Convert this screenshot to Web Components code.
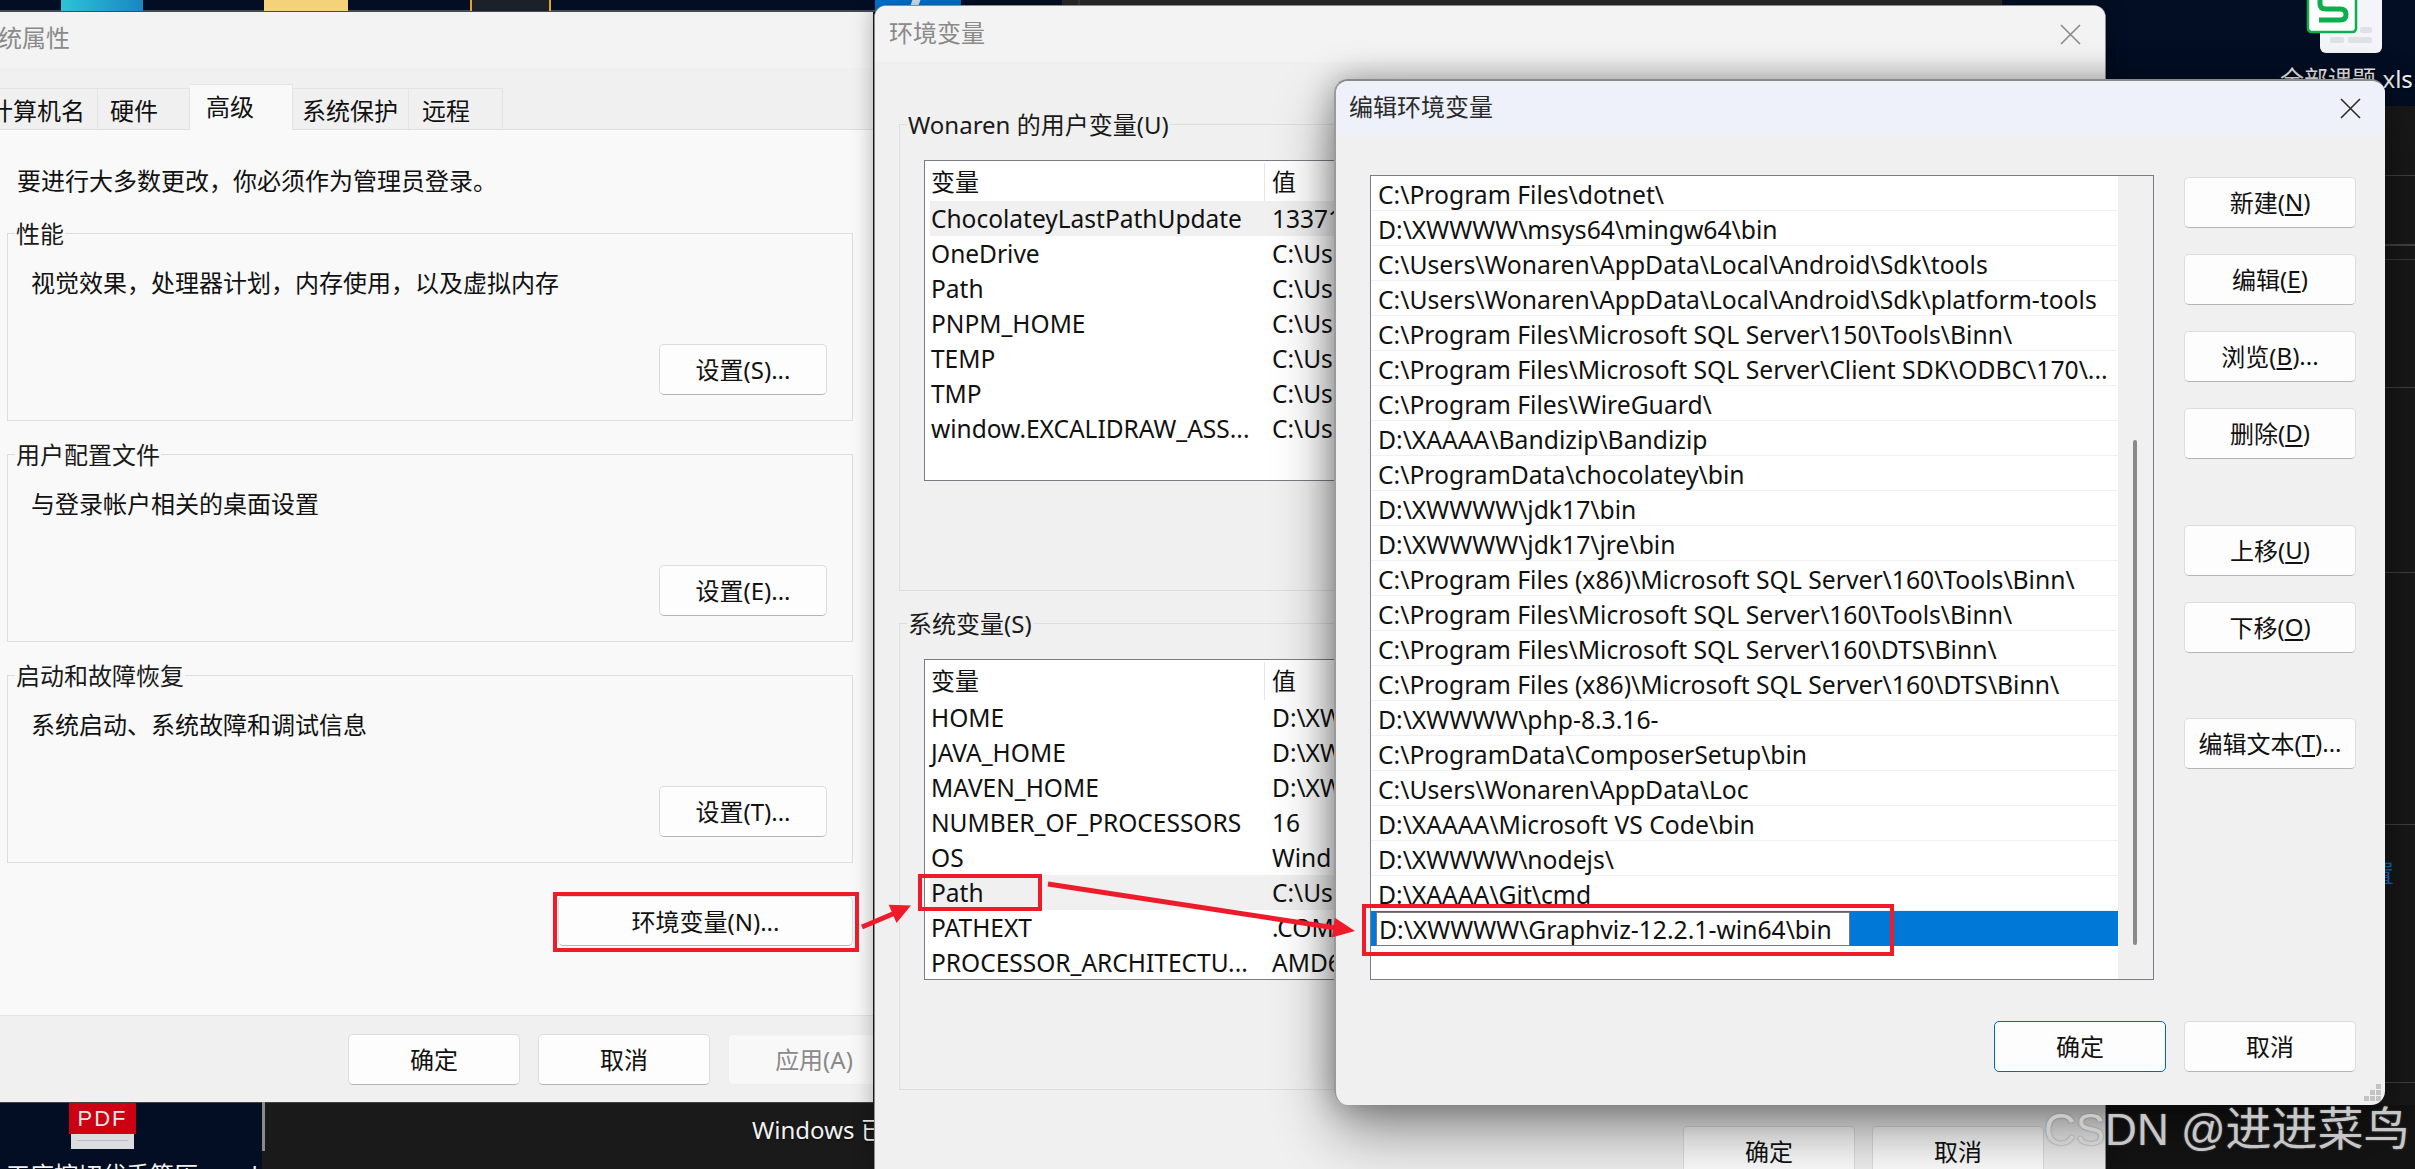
<!DOCTYPE html>
<html lang="zh">
<head>
<meta charset="utf-8">
<title>环境变量</title>
<style>
  html, body { margin: 0; padding: 0; background: #1a1a1a; }
  body {
    font-family: "Noto Sans", "Noto Sans CJK SC", sans-serif;
    font-size: 24px;
    color: #111;
    overflow: hidden;
  }
  #desk { position: relative; width: 2415px; height: 1169px; overflow: hidden; }
  desk-backdrop { position: absolute; left: 0; top: 0; width: 2415px; height: 1169px; }
  sys-dialog { position: absolute; left: -40px; top: 12px; width: 913px; height: 1090px; }
  env-dialog { position: absolute; left: 874px; top: 5px; width: 1232px; height: 1164px; }
  edit-dialog { position: absolute; left: 1334px; top: 79px; width: 1051px; height: 1026px; }
  note-overlay { position: absolute; left: 0; top: 0; width: 2415px; height: 1169px; }
  site-mark { position: absolute; left: 2044px; top: 1099px; }
</style>
</head>
<body>
<div id="desk">
  <desk-backdrop></desk-backdrop>
  <sys-dialog></sys-dialog>
  <env-dialog></env-dialog>
  <edit-dialog></edit-dialog>
  <note-overlay></note-overlay>
  <site-mark></site-mark>
</div>

<script>
  // Plain dialog button
  class WinButton extends HTMLElement {
    constructor() {
      super();
      this.attachShadow({ mode: 'open' });
      this.shadowRoot.innerHTML = `
        <style>
          :host {
            display: flex;
            align-items: center;
            justify-content: center;
            flex: none;
            box-sizing: border-box;
            width: 172px;
            height: 51px;
            padding-bottom: 2px;
            background: #fdfdfd;
            border: 1px solid #dcdcdc;
            border-bottom-color: #b4b4b4;
            border-radius: 5px;
            color: #111;
            white-space: nowrap;
          }
          :host([primary]) { border: 1.5px solid #0067c0; }
          :host([disabled]) { background: #f8f8f8; border-color: #eee; color: #8a8a8a; }
        </style>
        <slot></slot>
      `;
    }
  }
  customElements.define('win-button', WinButton);

  // Window frame: title bar with close cross, content in the slot
  class WinFrame extends HTMLElement {
    constructor() {
      super();
      this.attachShadow({ mode: 'open' });
      const cross = this.hasAttribute('noclose') ? '' : `
        <svg width="21" height="21" viewBox="0 0 21 21"><path d="M1 1 L20 20 M20 1 L1 20" fill="none" stroke="currentColor" stroke-width="1.6"/></svg>`;
      this.shadowRoot.innerHTML = `
        <style>
          :host {
            display: flex;
            flex-direction: column;
            height: 100%;
            box-sizing: border-box;
            overflow: hidden;
            background: #f0f0f0;
          }
          .bar {
            flex: none;
            display: flex;
            align-items: center;
            justify-content: space-between;
            height: var(--bar-height, 56px);
            padding: 0 24px 0 var(--bar-left, 14px);
            background: var(--bar-bg, #f3f3f3);
            color: var(--bar-color, #8a8a8a);
          }
          .bar span { margin-top: var(--bar-shift, -6px); }
        </style>
        <div class="bar"><span>${this.getAttribute('heading')}</span>${cross}</div>
        <slot></slot>
      `;
    }
  }
  customElements.define('win-frame', WinFrame);

  // Titled group box, the legend sits on the top border
  class GroupBox extends HTMLElement {
    constructor() {
      super();
      this.attachShadow({ mode: 'open' });
      this.shadowRoot.innerHTML = `
        <style>
          :host {
            display: flex;
            flex-direction: column;
            box-sizing: border-box;
            border: 1px solid #dedede;
          }
          .legend {
            flex: none;
            align-self: flex-start;
            height: 36px;
            line-height: 36px;
            margin: -18px 0 0 7px;
            padding: 0 1px;
            background: var(--legend-bg, #f9f9f9);
            color: #1a1a1a;
          }
        </style>
        <div class="legend">${this.getAttribute('legend')}</div>
        <slot></slot>
      `;
    }
  }
  customElements.define('group-box', GroupBox);

  // Tab strip of the system properties window
  class TabStrip extends HTMLElement {
    constructor() {
      super();
      this.attachShadow({ mode: 'open' });
      this.shadowRoot.innerHTML = `
        <style>
          :host {
            display: flex;
            align-items: flex-end;
            flex: none;
            height: 62px;
            box-sizing: border-box;
            padding-left: 16px;
            background: #f0f0f0;
            border-bottom: 1px solid #dfdfdf;
          }
          ::slotted(span) {
            box-sizing: border-box;
            height: 41px;
            line-height: 43px;
            border: 1px solid #e4e4e4;
            border-width: 1px 1px 0 0;
          }
          ::slotted(span.on) {
            height: 46px;
            line-height: 44px;
            margin-bottom: -1px;
            background: #f9f9f9;
            border-left-width: 0;
          }
        </style>
        <slot></slot>
      `;
    }
  }
  customElements.define('tab-strip', TabStrip);

  // Variable table: header row, rows come through the slot
  class VarList extends HTMLElement {
    constructor() {
      super();
      this.attachShadow({ mode: 'open' });
      this.shadowRoot.innerHTML = `
        <style>
          :host {
            display: block;
            box-sizing: border-box;
            height: 321px;
            margin: 17px 24px 0 24px;
            background: #fff;
            border: 1px solid #7b7b88;
            overflow: hidden;
          }
          .head { display: flex; height: 40px; box-sizing: border-box; padding: 2px 0 0 6px; line-height: 38px; }
          .head span:first-child { width: 333px; height: 38px; border-right: 1px solid #e5e5e5; }
          .head span:last-child { padding-left: 7px; }
        </style>
        <div class="head"><span>变量</span><span>值</span></div>
        <slot></slot>
      `;
    }
  }
  customElements.define('var-list', VarList);

  class VarRow extends HTMLElement {
    constructor() {
      super();
      this.attachShadow({ mode: 'open' });
      this.shadowRoot.innerHTML = `
        <style>
          :host { display: flex; height: 35px; line-height: 35px; margin-left: 5px; padding-left: 1px; white-space: nowrap; font-size: 24.5px; }
          :host([current]) { background: #f0f0f0; }
          .name { width: 341px; flex: none; }
        </style>
        <span class="name">${this.getAttribute('name')}</span><span>${this.getAttribute('value')}</span>
      `;
    }
  }
  customElements.define('var-row', VarRow);

  // One line of the Path editor
  class PathRow extends HTMLElement {
    constructor() {
      super();
      this.attachShadow({ mode: 'open' });
      this.shadowRoot.innerHTML = `
        <style>
          :host {
            display: block;
            box-sizing: border-box;
            height: 35px;
            line-height: 38px;
            padding-left: 7px;
            border-bottom: 1px solid #f0f0f0;
            white-space: nowrap;
            font-size: 24.7px;
          }
          :host([editing]) { padding: 1px 0 0 5px; background: #0078d7; border: 0; }
          .edit {
            display: block;
            box-sizing: border-box;
            width: 474px;
            height: 34px;
            line-height: 33px;
            padding-left: 2px;
            background: #fff;
            border: 1px solid #7a7a7a;
          }
        </style>
        ${this.hasAttribute('editing') ? '<span class="edit"><slot></slot></span>' : '<slot></slot>'}
      `;
    }
  }
  customElements.define('path-row', PathRow);

  // Left window: system properties
  class SysDialog extends HTMLElement {
    constructor() {
      super();
      this.attachShadow({ mode: 'open' });
      this.shadowRoot.innerHTML = `
        <style>
          :host { display: block; --bar-shift: -8px; }
          .body {
            flex: none;
            height: 885px;
            box-sizing: border-box;
            padding: 33px 20px 0 47px;
            background: #f9f9f9;
            display: flex;
            flex-direction: column;
          }
          .intro { height: 36px; line-height: 36px; margin: 0 0 34px 10px; }
          group-box { height: 188px; flex: none; margin-bottom: 33px; }
          .desc { height: 36px; line-height: 36px; margin: 13px 0 0 23px; }
          group-box win-button { width: 168px; margin: auto 25px 25px auto; }
          .env { width: 295px; height: 50px; margin: 0 0 0 auto; }
          .foot {
            flex: 1;
            display: flex;
            gap: 18px;
            padding: 18px 0 0 388px;
            background: #f0f0f0;
            border-top: 1px solid #e3e3e3;
          }
        </style>
        <win-frame heading="系统属性" noclose>
          <tab-strip>
            <span style="width:122px;padding-left:13px">计算机名</span>
            <span style="width:92px;padding-left:12px">硬件</span>
            <span class="on" style="width:103px;padding-left:16px">高级</span>
            <span style="width:116px;padding-left:9px">系统保护</span>
            <span style="width:94px;padding-left:13px">远程</span>
          </tab-strip>
          <div class="body">
            <div class="intro">要进行大多数更改，你必须作为管理员登录。</div>
            <group-box legend="性能">
              <div class="desc">视觉效果，处理器计划，内存使用，以及虚拟内存</div>
              <win-button>设置(S)...</win-button>
            </group-box>
            <group-box legend="用户配置文件">
              <div class="desc">与登录帐户相关的桌面设置</div>
              <win-button>设置(E)...</win-button>
            </group-box>
            <group-box legend="启动和故障恢复">
              <div class="desc">系统启动、系统故障和调试信息</div>
              <win-button>设置(T)...</win-button>
            </group-box>
            <win-button class="env">环境变量(N)...</win-button>
          </div>
          <div class="foot">
            <win-button>确定</win-button>
            <win-button>取消</win-button>
            <win-button disabled>应用(A)</win-button>
          </div>
        </win-frame>
      `;
    }
  }
  customElements.define('sys-dialog', SysDialog);

  // Middle window: environment variables
  class EnvDialog extends HTMLElement {
    constructor() {
      super();
      this.attachShadow({ mode: 'open' });
      this.shadowRoot.innerHTML = `
        <style>
          :host {
            display: block;
            border-radius: 12px 12px 0 0;
            overflow: hidden;
            box-shadow: 0 0 22px rgba(0,0,0,.3);
            --legend-bg: #f0f0f0;
            --bar-height: 56px;
          }
          win-frame { border: 1px solid #8c8c8c; border-bottom: 0; border-radius: 12px 12px 0 0; }
          .body { padding: 62px 24px 0 24px; display: flex; flex-direction: column; }
          group-box { height: 467px; flex: none; }
          group-box + group-box { margin-top: 32px; }
          .foot { display: flex; justify-content: flex-end; gap: 17px; padding: 36px 37px 0 0; }
        </style>
        <win-frame heading="环境变量">
          <div class="body">
            <group-box legend="Wonaren 的用户变量(U)">
              <var-list>
                <var-row current name="ChocolateyLastPathUpdate" value="13371"></var-row>
                <var-row name="OneDrive" value="C:\\Us"></var-row>
                <var-row name="Path" value="C:\\Us"></var-row>
                <var-row name="PNPM_HOME" value="C:\\Us"></var-row>
                <var-row name="TEMP" value="C:\\Us"></var-row>
                <var-row name="TMP" value="C:\\Us"></var-row>
                <var-row name="window.EXCALIDRAW_ASS..." value="C:\\Us"></var-row>
              </var-list>
            </group-box>
            <group-box legend="系统变量(S)">
              <var-list>
                <var-row name="HOME" value="D:\\XW"></var-row>
                <var-row name="JAVA_HOME" value="D:\\XW"></var-row>
                <var-row name="MAVEN_HOME" value="D:\\XW"></var-row>
                <var-row name="NUMBER_OF_PROCESSORS" value="16"></var-row>
                <var-row name="OS" value="Wind"></var-row>
                <var-row current name="Path" value="C:\\Us"></var-row>
                <var-row name="PATHEXT" value=".COM"></var-row>
                <var-row name="PROCESSOR_ARCHITECTU..." value="AMD6"></var-row>
              </var-list>
            </group-box>
            <div class="foot">
              <win-button>确定</win-button>
              <win-button>取消</win-button>
            </div>
          </div>
        </win-frame>
      `;
    }
  }
  customElements.define('env-dialog', EnvDialog);

  // Front window: edit the Path variable
  class EditDialog extends HTMLElement {
    constructor() {
      super();
      this.attachShadow({ mode: 'open' });
      const paths = [
        'C:\\Program Files\\dotnet\\',
        'D:\\XWWWW\\msys64\\mingw64\\bin',
        'C:\\Users\\Wonaren\\AppData\\Local\\Android\\Sdk\\tools',
        'C:\\Users\\Wonaren\\AppData\\Local\\Android\\Sdk\\platform-tools',
        'C:\\Program Files\\Microsoft SQL Server\\150\\Tools\\Binn\\',
        'C:\\Program Files\\Microsoft SQL Server\\Client SDK\\ODBC\\170\\...',
        'C:\\Program Files\\WireGuard\\',
        'D:\\XAAAA\\Bandizip\\Bandizip',
        'C:\\ProgramData\\chocolatey\\bin',
        'D:\\XWWWW\\jdk17\\bin',
        'D:\\XWWWW\\jdk17\\jre\\bin',
        'C:\\Program Files (x86)\\Microsoft SQL Server\\160\\Tools\\Binn\\',
        'C:\\Program Files\\Microsoft SQL Server\\160\\Tools\\Binn\\',
        'C:\\Program Files\\Microsoft SQL Server\\160\\DTS\\Binn\\',
        'C:\\Program Files (x86)\\Microsoft SQL Server\\160\\DTS\\Binn\\',
        'D:\\XWWWW\\php-8.3.16-',
        'C:\\ProgramData\\ComposerSetup\\bin',
        'C:\\Users\\Wonaren\\AppData\\Loc',
        'D:\\XAAAA\\Microsoft VS Code\\bin',
        'D:\\XWWWW\\nodejs\\',
        'D:\\XAAAA\\Git\\cmd'
      ];
      this.shadowRoot.innerHTML = `
        <style>
          :host {
            display: block;
            border-radius: 14px;
            box-shadow: 0 0 30px rgba(0,0,0,.3), 0 26px 60px rgba(0,0,0,.42);
            --bar-height: 55px;
            --bar-bg: #eef0fa;
            --bar-color: #2b2b2b;
            --bar-left: 13px;
          }
          win-frame { border-radius: 14px; border-top: 2px solid #8a8a8a; border-left: 2px solid #9a9a9a; }
          .main { flex: none; display: flex; gap: 30px; padding: 39px 29px 0 34px; }
          .list {
            flex: none;
            display: flex;
            width: 784px;
            height: 805px;
            box-sizing: border-box;
            background: #fff;
            border: 1px solid #7b7b88;
          }
          .rows { flex: 1; overflow: hidden; }
          .track { flex: none; width: 35px; background: #f0f0f0; padding: 264px 0 0 15px; box-sizing: border-box; }
          .thumb { width: 4px; height: 505px; background: #8a8a8a; border-radius: 2px; }
          .side { display: flex; flex-direction: column; gap: 26px; padding-top: 2px; }
          .far { margin-top: 40px; }
          .side .last { margin-top: 39px; }
          u { text-underline-offset: 3px; }
          .foot { display: flex; justify-content: flex-end; gap: 18px; padding: 41px 29px 0 0; }
          .grip { position: absolute; right: 3px; bottom: 3px; }
        </style>
        <win-frame heading="编辑环境变量">
          <div class="main">
            <div class="list">
              <div class="rows">
                ${paths.map(p => `<path-row>${p}</path-row>`).join('')}
                <path-row editing>D:\\XWWWW\\Graphviz-12.2.1-win64\\bin</path-row>
              </div>
              <div class="track"><div class="thumb"></div></div>
            </div>
            <div class="side">
              <win-button>新建(<u>N</u>)</win-button>
              <win-button>编辑(<u>E</u>)</win-button>
              <win-button>浏览(<u>B</u>)...</win-button>
              <win-button>删除(<u>D</u>)</win-button>
              <win-button class="far">上移(<u>U</u>)</win-button>
              <win-button>下移(<u>O</u>)</win-button>
              <win-button class="last">编辑文本(<u>T</u>)...</win-button>
            </div>
          </div>
          <div class="foot">
            <win-button primary>确定</win-button>
            <win-button>取消</win-button>
          </div>
        </win-frame>
        <svg class="grip" width="18" height="18" viewBox="0 0 18 18" fill="#c4c4c4">
          <rect x="12" y="0" width="5" height="5"/>
          <rect x="6" y="6" width="5" height="5"/><rect x="12" y="6" width="5" height="5"/>
          <rect x="0" y="12" width="5" height="5"/><rect x="6" y="12" width="5" height="5"/><rect x="12" y="12" width="5" height="5"/>
        </svg>
      `;
    }
  }
  customElements.define('edit-dialog', EditDialog);

  // The desktop behind the windows, items are free on the canvas
  class DeskBackdrop extends HTMLElement {
    constructor() {
      super();
      this.attachShadow({ mode: 'open' });
      this.shadowRoot.innerHTML = `
        <style>
          :host { display: block; background: #1a1a1a; overflow: hidden; color: #f2f2f2; }
          div, span, svg { position: absolute; }
          .navy { background: #030e24; }
          .label { white-space: nowrap; text-shadow: 0 1px 2px rgba(0,0,0,.6); }
        </style>
        <!-- top edge -->
        <div class="navy" style="left:0;top:0;width:1062px;height:12px"></div>
        <div style="left:0;top:10px;width:875px;height:2px;background:#454b55"></div>
        <div style="left:61px;top:0;width:82px;height:11px;background:linear-gradient(90deg,#2cc4d8,#1a86c0)"></div>
        <div style="left:264px;top:0;width:84px;height:11px;background:#f3d27a"></div>
        <div style="left:470px;top:0;width:81px;height:11px;box-sizing:border-box;background:#1c2028;border:solid #dfa22a;border-width:0 2px"></div>
        <div style="left:875px;top:0;width:86px;height:12px;background:#0074d0"></div>
        <div style="left:911px;top:0;width:8px;height:8px;background:#dfeaf5;transform:skewX(-20deg)"></div>
        <div style="left:1062px;top:0;width:940px;height:12px;background:#2a2a2a"></div>
        <div style="left:1078px;top:0;width:2px;height:12px;background:#3a3a3a"></div>
        <!-- top right, with the spreadsheet icon -->
        <div class="navy" style="left:2002px;top:0;width:413px;height:106px"></div>
        <div style="left:2320px;top:0;width:62px;height:53px;background:#f4f5f9;border-radius:0 0 6px 6px"></div>
        <div style="left:2360px;top:27px;width:12px;height:6px;background:#dfe1e6;border-radius:2px"></div>
        <div style="left:2330px;top:37px;width:14px;height:6px;background:#dfe1e6;border-radius:2px"></div>
        <div style="left:2348px;top:37px;width:24px;height:6px;background:#dfe1e6;border-radius:2px"></div>
        <svg style="left:2306px;top:0" width="52" height="34" viewBox="0 0 52 34">
          <path d="M2 0 V28 Q2 32 6 32 H46 Q50 32 50 28 V0" fill="#fff" stroke="#0bb04c" stroke-width="2.5"/>
          <path d="M14 0 V4 Q14 9 20 9 H34 Q40 9 40 14.5 Q40 20 34 20 H13" fill="none" stroke="#0bb04c" stroke-width="5"/>
        </svg>
        <span class="label" style="left:2280px;top:62px;line-height:34px">全部课题.xls</span>
        <!-- right strip -->
        <div style="left:2385px;top:175px;width:30px;height:1px;background:#454545"></div>
        <div style="left:2385px;top:244px;width:30px;height:2px;background:#454545"></div>
        <div style="left:2385px;top:259px;width:30px;height:1px;background:#3c3c3c"></div>
        <div style="left:2385px;top:387px;width:30px;height:1px;background:#454545"></div>
        <div style="left:2385px;top:572px;width:30px;height:1px;background:#454545"></div>
        <div style="left:2385px;top:824px;width:30px;height:1px;background:#454545"></div>
        <div style="left:2385px;top:1082px;width:30px;height:1px;background:#454545"></div>
        <span style="left:2370px;top:860px;color:#0a7ad0;line-height:26px">置</span>
        <div style="left:2106px;top:1105px;width:309px;height:64px;background:#141414"></div>
        <!-- bottom left, with the pdf icon -->
        <div class="navy" style="left:0;top:1102px;width:262px;height:67px"></div>
        <div style="left:0;top:1100px;width:873px;height:3px;background:#444"></div>
        <div style="left:262px;top:1102px;width:3px;height:49px;background:#8a8a8a"></div>
        <div style="left:71px;top:1103px;width:63px;height:46px;background:#dcdde0"></div>
        <div style="left:77px;top:1140px;width:51px;height:1px;background:#bdbdbd"></div>
        <div style="left:69px;top:1103px;width:67px;height:31px;background:#cc0012;color:#e6e6e6;font:22px/31px 'Liberation Sans',sans-serif;letter-spacing:2px;text-align:center">PDF</div>
        <span class="label" style="left:6px;top:1158px;line-height:34px">工序控切代手签历.......d</span>
        <span class="label" style="left:752px;top:1112px;line-height:36px">Windows 已</span>
      `;
    }
  }
  customElements.define('desk-backdrop', DeskBackdrop);

  // Red marks somebody drew over the screenshot
  class NoteOverlay extends HTMLElement {
    constructor() {
      super();
      this.attachShadow({ mode: 'open' });
      this.shadowRoot.innerHTML = `
        <style>:host { display: block; pointer-events: none; } svg { display: block; }</style>
        <svg width="2415" height="1169" viewBox="0 0 2415 1169" fill="none" stroke="#ee1c2a" stroke-width="4">
          <rect x="555" y="894" width="302" height="56"/>
          <rect x="920" y="876" width="120" height="33"/>
          <rect x="1364" y="906" width="528" height="48"/>
          <path d="M862 927 L895 913" stroke-width="5"/>
          <polygon points="911,905.6 896.5,923 888.7,904.7" fill="#ee1c2a" stroke="none"/>
          <path d="M1048 884 L1336 928" stroke-width="5"/>
          <polygon points="1355,931 1331.8,937.6 1334.8,917.8" fill="#ee1c2a" stroke="none"/>
        </svg>
      `;
    }
  }
  customElements.define('note-overlay', NoteOverlay);

  // Image host watermark
  class SiteMark extends HTMLElement {
    constructor() {
      super();
      this.attachShadow({ mode: 'open' });
      this.shadowRoot.innerHTML = `
        <style>
          :host {
            display: block;
            white-space: nowrap;
            font: 44px/60px "Liberation Sans", "Noto Sans CJK SC", sans-serif;
            color: rgba(215,215,215,.9);
            text-shadow: 0 0 2px rgba(110,110,110,.9);
          }
          span { font-size: 46px; }
        </style>
        CSDN @<span>进进菜鸟</span>
      `;
    }
  }
  customElements.define('site-mark', SiteMark);
</script>
</body>
</html>
